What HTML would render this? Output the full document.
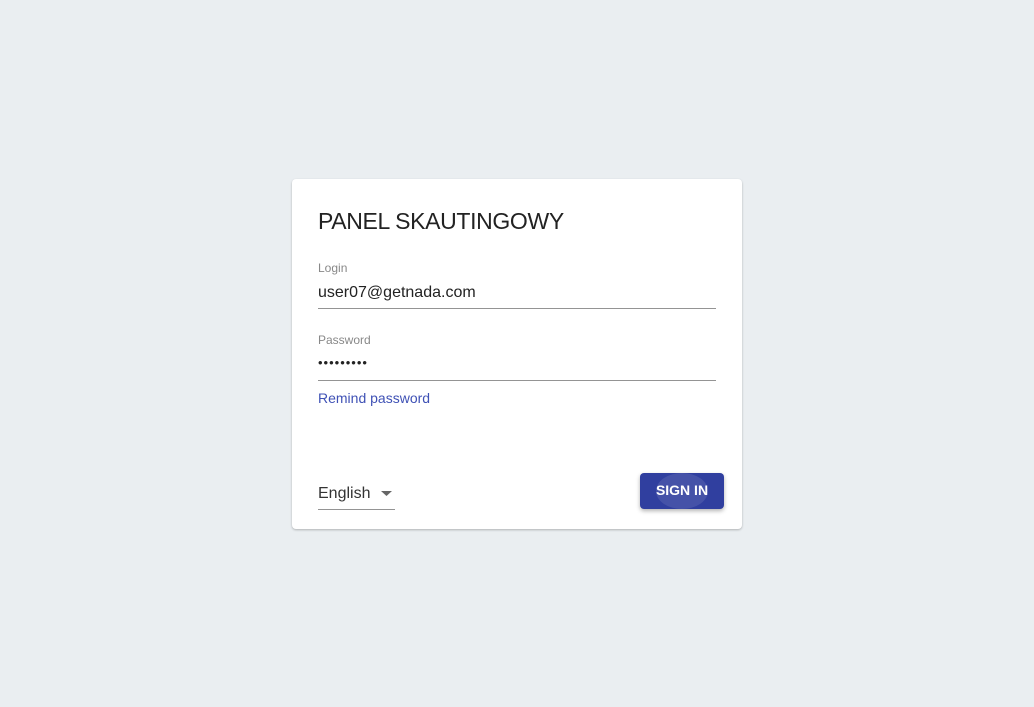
<!DOCTYPE html>
<html><head><style>
body{margin:0;width:1034px;height:707px;background:#eaeef1;font-family:"Liberation Sans",sans-serif;position:relative;overflow:hidden}
.card{position:absolute;left:292px;top:179px;width:450px;height:350px;background:#fff;border-radius:4px;box-shadow:0 1px 2px rgba(0,0,0,.25)}
.t{position:absolute;left:26px;top:29px;font-size:23px;color:#222;letter-spacing:-0.35px}
.lbl{position:absolute;left:26px;font-size:12px;color:#888}
.val{position:absolute;left:26px;font-size:16px;color:#222}
.line{position:absolute;left:26px;width:398px;height:1px;background:#949494}
.link{position:absolute;left:26px;top:211px;font-size:14px;color:#3f51b5}
.sel{position:absolute;left:26px;top:306px;font-size:16px;color:#333}
.btn{position:absolute;left:348px;top:294px;width:84px;height:36px;background:#303f9f;border-radius:4px;color:#fff;font-weight:bold;font-size:14px;line-height:34px;text-align:center;box-shadow:0 2px 4px rgba(0,0,0,.3);overflow:hidden}
.btn i{position:absolute;left:16px;top:0;width:52px;height:36px;border-radius:50%;background:rgba(255,255,255,.1)}
</style></head><body>
<div class="card">
<div class="t">PANEL SKAUTINGOWY</div>
<div class="lbl" style="top:82px">Login</div>
<div class="val" style="top:105px">user07@getnada.com</div>
<div class="line" style="top:129px"></div>
<div class="lbl" style="top:154px">Password</div>
<div class="val" style="top:176px;font-size:13px;letter-spacing:1px">•••••••••</div>
<div class="line" style="top:201px"></div>
<div class="link">Remind password</div>
<div class="sel">English <svg width="12" height="8" style="margin-left:6px;vertical-align:middle"><path d="M0 1h11l-5.5 5z" fill="#666"/></svg></div>
<div class="line" style="top:330px;width:77px"></div>
<div class="btn"><i></i><span style="position:relative">SIGN IN</span></div>
</div>
</body></html>
